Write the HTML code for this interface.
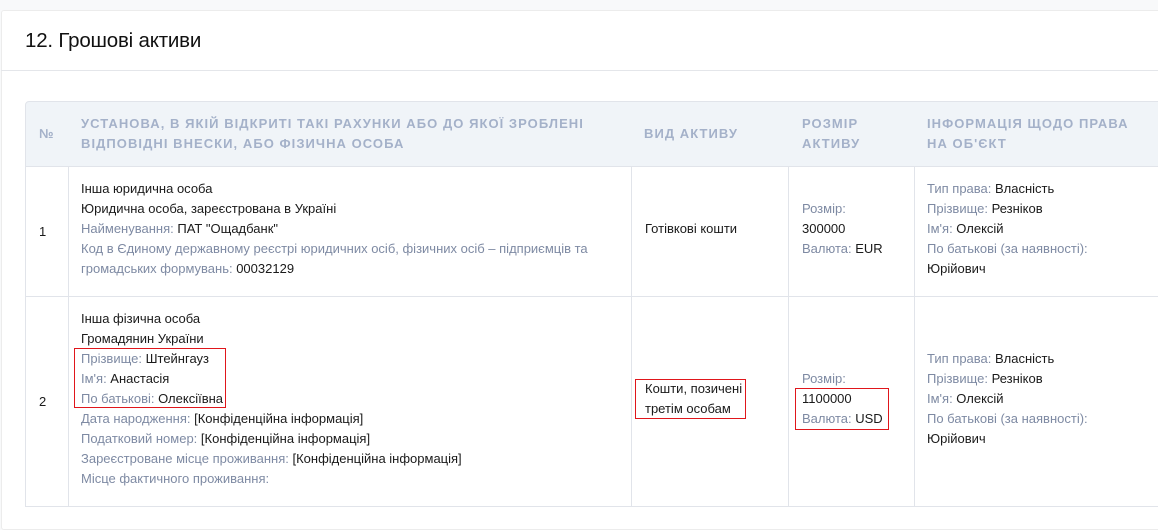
<!DOCTYPE html><html><head><meta charset="utf-8"><style>
*{margin:0;padding:0;box-sizing:border-box}
body{width:1158px;height:512px;background:#f8f9fa;font-family:"Liberation Sans",sans-serif;font-size:13px;color:#1a1a1a;overflow:hidden;position:relative}
.card{position:absolute;left:1px;top:10px;width:1170px;height:520px;background:#fff;border:1px solid #ececec;border-radius:3px}
.title{position:absolute;left:25px;top:29px;font-size:20.5px;color:#111;letter-spacing:-0.2px}
.hr{position:absolute;left:1px;top:70px;width:1160px;height:1px;background:#e4e6ea}
.c{position:absolute;border-right:1px solid #e1e4ea;border-bottom:1px solid #e1e4ea}
.h{background:#f0f4f8;color:#a4b1c9;font-weight:bold;letter-spacing:1.05px;font-size:13px;line-height:20px}
.l{position:absolute;line-height:20px;white-space:nowrap}
.g{color:#7e8aa3}
.r{position:absolute;border:1px solid #e0161b}
</style></head><body>
<div class="card"></div>
<div class="title">12. Грошові активи</div>
<div class="hr"></div>
<div class="c h" style="left:25px;top:101px;width:44px;height:66px;border-left:1px solid #e1e4ea;border-top:1px solid #e1e4ea;border-radius:4px 0 0 0"></div>
<div class="c h" style="left:68px;top:101px;width:564px;height:66px;border-top:1px solid #e1e4ea"></div>
<div class="c h" style="left:631px;top:101px;width:158px;height:66px;border-top:1px solid #e1e4ea"></div>
<div class="c h" style="left:788px;top:101px;width:127px;height:66px;border-top:1px solid #e1e4ea"></div>
<div class="c h" style="left:914px;top:101px;width:260px;height:66px;border-top:1px solid #e1e4ea"></div>
<div class="l h" style="left:39px;top:124px;background:none">№</div>
<div class="l h" style="left:81px;top:114px;background:none">УСТАНОВА, В ЯКІЙ ВІДКРИТІ ТАКІ РАХУНКИ АБО ДО ЯКОЇ ЗРОБЛЕНІ<br>ВІДПОВІДНІ ВНЕСКИ, АБО ФІЗИЧНА ОСОБА</div>
<div class="l h" style="left:644px;top:124px;background:none">ВИД АКТИВУ</div>
<div class="l h" style="left:802px;top:114px;background:none">РОЗМІР<br>АКТИВУ</div>
<div class="l h" style="left:927px;top:114px;background:none">ІНФОРМАЦІЯ ЩОДО ПРАВА<br>НА ОБ'ЄКТ</div>

<div class="c" style="left:25px;top:166px;width:44px;height:131px;border-left:1px solid #e1e4ea"></div>
<div class="c" style="left:68px;top:166px;width:564px;height:131px"></div>
<div class="c" style="left:631px;top:166px;width:158px;height:131px"></div>
<div class="c" style="left:788px;top:166px;width:127px;height:131px"></div>
<div class="c" style="left:914px;top:166px;width:260px;height:131px"></div>
<div class="l" style="left:39px;top:222px">1</div>
<div class="l" style="left:81px;top:179px">Інша юридична особа<br>Юридична особа, зареєстрована в Україні<br><span class="g">Найменування:</span> ПАТ "Ощадбанк"<br><span class="g">Код в Єдиному державному реєстрі юридичних осіб, фізичних осіб – підприємців та<br>громадських формувань:</span> 00032129</div>
<div class="l" style="left:645px;top:219px">Готівкові кошти</div>
<div class="l" style="left:802px;top:199px"><span class="g">Розмір:</span><br>300000<br><span class="g">Валюта:</span> EUR</div>
<div class="l" style="left:927px;top:179px"><span class="g">Тип права:</span> Власність<br><span class="g">Прізвище:</span> Резніков<br><span class="g">Ім'я:</span> Олексій<br><span class="g">По батькові (за наявності):</span><br>Юрійович</div>

<div class="c" style="left:25px;top:296px;width:44px;height:211px;border-left:1px solid #e1e4ea"></div>
<div class="c" style="left:68px;top:296px;width:564px;height:211px"></div>
<div class="c" style="left:631px;top:296px;width:158px;height:211px"></div>
<div class="c" style="left:788px;top:296px;width:127px;height:211px"></div>
<div class="c" style="left:914px;top:296px;width:260px;height:211px"></div>
<div class="l" style="left:39px;top:392px">2</div>
<div class="l" style="left:81px;top:309px">Інша фізична особа<br>Громадянин України<br><span class="g">Прізвище:</span> Штейнгауз<br><span class="g">Ім'я:</span> Анастасія<br><span class="g">По батькові:</span> Олексіївна<br><span class="g">Дата народження:</span> [Конфіденційна інформація]<br><span class="g">Податковий номер:</span> [Конфіденційна інформація]<br><span class="g">Зареєстроване місце проживання:</span> [Конфіденційна інформація]<br><span class="g">Місце фактичного проживання:</span></div>
<div class="l" style="left:645px;top:379px">Кошти, позичені<br>третім особам</div>
<div class="l" style="left:802px;top:369px"><span class="g">Розмір:</span><br>1100000<br><span class="g">Валюта:</span> USD</div>
<div class="l" style="left:927px;top:349px"><span class="g">Тип права:</span> Власність<br><span class="g">Прізвище:</span> Резніков<br><span class="g">Ім'я:</span> Олексій<br><span class="g">По батькові (за наявності):</span><br>Юрійович</div>
<div class="r" style="left:74px;top:348px;width:152px;height:60px"></div>
<div class="r" style="left:635px;top:379px;width:111px;height:40px"></div>
<div class="r" style="left:795px;top:388px;width:94px;height:42px"></div>
</body></html>
